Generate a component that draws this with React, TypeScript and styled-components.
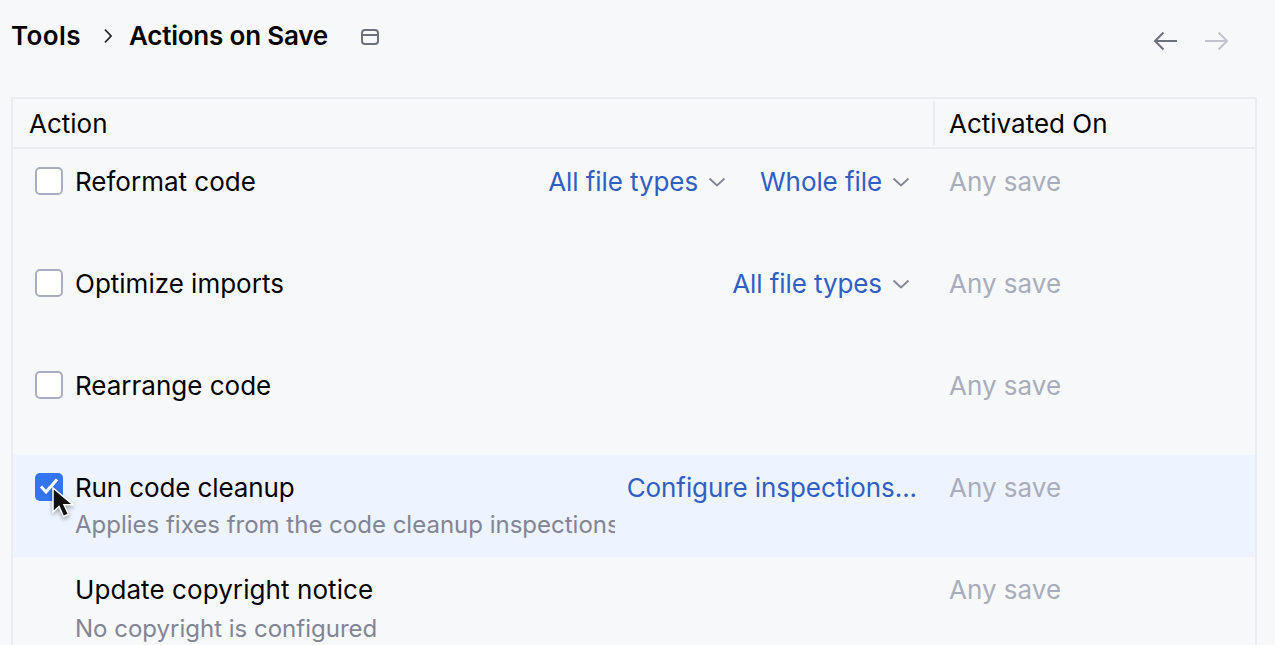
import React from "react";
import styled, { createGlobalStyle } from "styled-components";

const Global = createGlobalStyle`
  html, body { margin: 0; padding: 0; background: #f7f8fa; }
  body { font-family: Inter, "Liberation Sans", sans-serif; color: #000; overflow: hidden; }
  * { box-sizing: border-box; }
`;

const Page = styled.div`
  width: 1275px;
  height: 645px;
  overflow: hidden;
  padding: 0 18px 0 11px;
  background: #f7f8fa;
`;

const TitleBar = styled.div`
  height: 97px;
  display: flex;
  align-items: flex-start;
`;

const Crumbs = styled.div`
  display: flex;
  align-items: center;
  height: 72px;
  font-size: 26px;
  font-weight: 600;
  line-height: 32px;
`;

const Crumb = styled.span<{ $track: number }>`
  letter-spacing: ${(p) => p.$track}px;
`;

const Sep = styled.svg`
  width: 10px;
  height: 16px;
  margin: 0 17px 0 21px;
`;

const WindowIcon = styled.svg`
  width: 18px;
  height: 16px;
  margin: 2px 0 0 33px;
`;

const Nav = styled.div`
  margin-left: auto;
  display: flex;
  gap: 28px;
  padding: 31px 28px 0 0;
`;

const Arrow = styled.svg`
  width: 24px;
  height: 20px;
`;

const Table = styled.div`
  border: 2px solid #ebecf0;
  border-bottom: none;
`;

const HeadRow = styled.div`
  display: grid;
  grid-template-columns: 920px 1fr;
  height: 50px;
  border-bottom: 2px solid #ebecf0;
  font-size: 26px;
  line-height: 49px;
`;

const HeadCell = styled.div<{ $divided?: boolean }>`
  padding-left: ${(p) => (p.$divided ? "14px" : "16px")};
  ${(p) => (p.$divided ? "border-left: 2px solid #ebecf0; margin-top: 2px; height: 44px; line-height: 45px;" : "")}
`;

const Row = styled.div<{ $active?: boolean }>`
  display: grid;
  grid-template-columns: 920px 1fr;
  height: 102px;
  background: ${(p) => (p.$active ? "#edf3ff" : "transparent")};
`;

const ActionCell = styled.div`
  display: flex;
  align-items: flex-start;
  padding: 17px 16px 0 22px;
  min-width: 0;
`;

const CheckSlot = styled.div`
  width: 40px;
  height: 28px;
  margin-top: 1px;
  flex: none;
  position: relative;
`;

const Box = styled.div<{ $on?: boolean }>`
  width: 28px;
  height: 28px;
  border-radius: 5px;
  background: ${(p) => (p.$on ? "#3574f0" : "#fff")};
  border: ${(p) => (p.$on ? "none" : "2px solid #a9adc0")};
  display: flex;
  align-items: center;
  justify-content: center;
`;

const Cursor = styled.svg`
  position: absolute;
  left: 16px;
  top: 14px;
  width: 26px;
  height: 34px;
  filter: drop-shadow(0 2px 2px rgba(0, 0, 0, 0.35));
`;

const Texts = styled.div`
  max-width: 540px;
  flex: none;
  overflow: hidden;
  white-space: nowrap;
`;

const Name = styled.div<{ $track?: number }>`
  font-size: 26px;
  line-height: 32px;
  letter-spacing: ${(p) => p.$track ?? 0}px;
`;

const Hint = styled.div<{ $gap: number }>`
  font-size: 24px;
  line-height: 30px;
  color: #818594;
  margin-top: ${(p) => p.$gap}px;
`;

const Controls = styled.div`
  margin-left: auto;
  display: flex;
  align-items: center;
  gap: 27px;
  height: 32px;
`;

const Link = styled.span`
  font-size: 26px;
  line-height: 32px;
  letter-spacing: -0.08px;
  color: #2f5fc4;
  white-space: nowrap;
  display: inline-flex;
  align-items: center;
`;

const Chevron = styled.svg`
  width: 18px;
  height: 10px;
  margin: 0 -9px 0 10px;
`;

const DropLink = styled(Link)`
  margin-right: 16px;
`;

const SaveCell = styled.div`
  padding: 17px 0 0 16px;
  font-size: 26px;
  line-height: 32px;
  color: #a8adbd;
`;

const Drop = ({ label }: { label: string }) => (
  <DropLink>
    {label}
    <Chevron viewBox="0 0 18 10" fill="none" stroke="#818594" strokeWidth="1.8">
      <path d="M1.500 1.500 9 8.500 16.500 1.500" />
    </Chevron>
  </DropLink>
);

const rows = [
  { name: "Reformat code", controls: ["All file types", "Whole file"] },
  { name: "Optimize imports", controls: ["All file types"] },
  { name: "Rearrange code", controls: [] as string[] },
];

export default function App() {
  return (
    <Page>
      <Global />
      <TitleBar>
        <Crumbs>
          <Crumb $track={0.4}>Tools</Crumb>
          <Sep viewBox="0 0 10 16" fill="none" stroke="#22252b" strokeWidth="1.8">
            <path d="M3 1.500 9 8l-6 6.500" />
          </Sep>
          <Crumb $track={-0.2}>Actions on Save</Crumb>
          <WindowIcon viewBox="0 0 18 16" fill="none" stroke="#6c707e" strokeWidth="2">
            <rect x="1" y="1" width="16" height="14" rx="3" />
            <path d="M1 6h16" />
          </WindowIcon>
        </Crumbs>
        <Nav>
          <Arrow viewBox="0 0 24 20" fill="none" stroke="#6c707e" strokeWidth="2">
            <path d="M24 10H2M10.500 1.500 2 10l8.500 8.500" />
          </Arrow>
          <Arrow viewBox="0 0 24 20" fill="none" stroke="#c2c4cb" strokeWidth="2">
            <path d="M0 10h22M13.500 1.500 22 10l-8.500 8.500" />
          </Arrow>
        </Nav>
      </TitleBar>
      <Table>
        <HeadRow>
          <HeadCell>Action</HeadCell>
          <HeadCell $divided>Activated On</HeadCell>
        </HeadRow>
        {rows.map((r) => (
          <Row key={r.name}>
            <ActionCell>
              <CheckSlot>
                <Box />
              </CheckSlot>
              <Texts>
                <Name>{r.name}</Name>
              </Texts>
              <Controls>
                {r.controls.map((c) => (
                  <Drop key={c} label={c} />
                ))}
              </Controls>
            </ActionCell>
            <SaveCell>Any save</SaveCell>
          </Row>
        ))}
        <Row $active>
          <ActionCell>
            <CheckSlot>
              <Box $on>
                <svg width="20" height="18" viewBox="0 0 20 18" fill="none" stroke="#fff" strokeWidth="3">
                  <path d="M2 8.500 7 14 18 1.500" />
                </svg>
              </Box>
              <Cursor viewBox="0 0 26 34">
                <path d="M2 1v24l6-5.500 4.500 10 5-2.200-4.500-9.500h9z" fill="#111" stroke="#fff" strokeWidth="1.500" />
              </Cursor>
            </CheckSlot>
            <Texts>
              <Name $track={-0.12}>Run code cleanup</Name>
              <Hint $gap={6}>Applies fixes from the code cleanup inspections profile</Hint>
            </Texts>
            <Controls>
              <Link>Configure inspections...</Link>
            </Controls>
          </ActionCell>
          <SaveCell>Any save</SaveCell>
        </Row>
        <Row>
          <ActionCell>
            <CheckSlot />
            <Texts>
              <Name $track={0.08}>Update copyright notice</Name>
              <Hint $gap={8}>No copyright is configured</Hint>
            </Texts>
          </ActionCell>
          <SaveCell>Any save</SaveCell>
        </Row>
      </Table>
    </Page>
  );
}
